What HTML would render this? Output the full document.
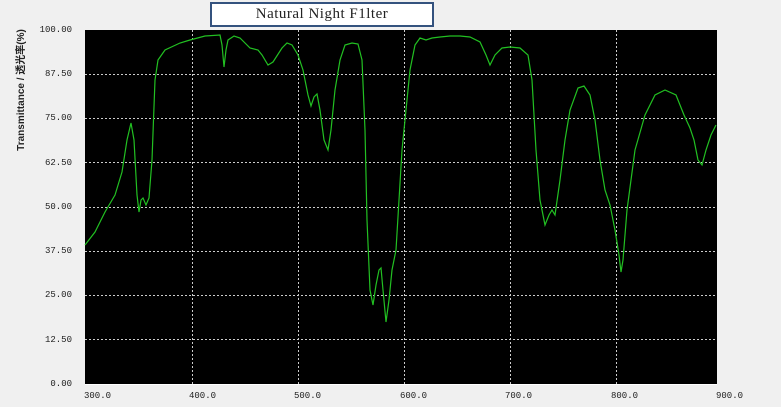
<!DOCTYPE html>
<html><head><style>
body{margin:0;width:781px;height:407px;background:#f0f0f0;overflow:hidden;position:relative;font-family:"Liberation Mono",monospace}
.t{position:absolute;left:210px;top:2px;width:220px;height:21px;border:2px solid #34527e;background:#fff;font-family:"Liberation Serif",serif;font-size:15px;text-align:center;line-height:21px;letter-spacing:0.5px;color:#222}
.yl{position:absolute;right:709px;font-size:9px;color:#222}
.xl{position:absolute;top:391px;font-size:9px;color:#222}
.yt{position:absolute;left:-43px;top:83px;width:130px;height:14px;line-height:14px;text-align:center;transform:rotate(-90deg);transform-origin:center;font-family:"Liberation Sans","Noto Sans CJK SC",sans-serif;font-weight:bold;font-size:10px;white-space:nowrap;color:#222}
</style></head><body>
<div class="t">Natural Night F1lter</div>
<div class="yt">Transmittance / 透光率(%)</div>
<div class="yl" style="top:25px">100.00</div>
<div class="yl" style="top:69px">87.50</div>
<div class="yl" style="top:113px">75.00</div>
<div class="yl" style="top:158px">62.50</div>
<div class="yl" style="top:202px">50.00</div>
<div class="yl" style="top:246px">37.50</div>
<div class="yl" style="top:290px">25.00</div>
<div class="yl" style="top:335px">12.50</div>
<div class="yl" style="top:379px">0.00</div>
<div class="xl" style="left:84px">300.0</div>
<div class="xl" style="left:189px">400.0</div>
<div class="xl" style="left:294px">500.0</div>
<div class="xl" style="left:400px">600.0</div>
<div class="xl" style="left:505px">700.0</div>
<div class="xl" style="left:611px">800.0</div>
<div class="xl" style="left:716px">900.0</div>
<svg style="position:absolute;left:0;top:0" width="781" height="407">
<rect x="85" y="30" width="632" height="354" fill="#000"/>
<g stroke="#ccc" stroke-width="1" stroke-dasharray="2,2">
<line x1="85" x2="717" y1="74.5" y2="74.5"/><line x1="85" x2="717" y1="118.5" y2="118.5"/><line x1="85" x2="717" y1="162.5" y2="162.5"/><line x1="85" x2="717" y1="207.5" y2="207.5"/><line x1="85" x2="717" y1="251.5" y2="251.5"/><line x1="85" x2="717" y1="295.5" y2="295.5"/><line x1="85" x2="717" y1="339.5" y2="339.5"/>
<line y1="30" y2="384" x1="192.5" x2="192.5"/><line y1="30" y2="384" x1="298.5" x2="298.5"/><line y1="30" y2="384" x1="404.5" x2="404.5"/><line y1="30" y2="384" x1="510.5" x2="510.5"/><line y1="30" y2="384" x1="616.5" x2="616.5"/>
</g>
<line x1="85" x2="717" y1="384.5" y2="384.5" stroke="#fff"/>
<polyline fill="none" stroke="#22c022" stroke-width="1.2" points="85,245 95,232 105,212 115,195 122,172 127,140 131,123 134,140 137,195 139,212 141,200 143,198 146,205 149,198 152,160 155,80 158,60 165,50 180,43 190,40 205,36 220,35 222,45 224,67 226,50 228,40 234,36 240,38 250,48 258,50 262,55 268,65 273,62 282,48 287,43 292,45 298,55 303,70 308,95 311,106 314,97 317,94 320,110 324,140 328,150 331,130 335,90 340,60 345,45 352,43 358,44 362,60 365,130 367,220 370,290 373,305 376,285 379,270 381,268 383,290 386,322 389,300 392,270 396,250 399,200 402,150 406,110 410,70 415,45 420,38 426,40 432,38 440,37 450,36 460,36 470,37 480,42 486,55 490,65 495,55 502,48 510,47 520,48 528,55 532,80 536,150 540,200 545,225 549,215 552,210 555,215 560,180 565,140 570,110 578,88 584,86 590,95 595,120 600,160 605,190 610,205 615,230 619,255 621,272 623,260 627,210 635,150 645,115 655,95 665,90 676,95 684,115 690,128 694,140 698,160 702,165 706,150 711,135 716,125"/>
</svg>
</body></html>
